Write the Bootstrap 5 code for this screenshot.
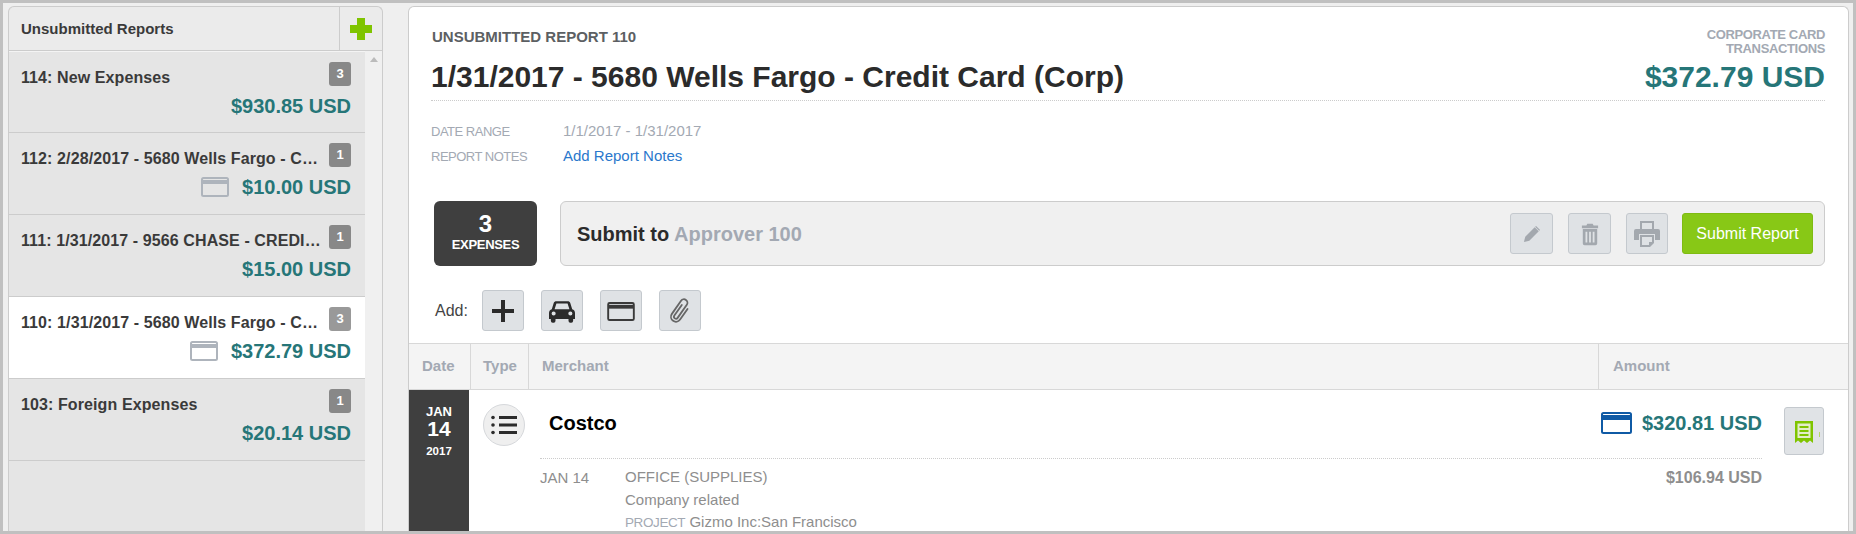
<!doctype html>
<html lang="en">
  <head>
    <meta charset="UTF-8">
    <meta name="viewport" content="width=device-width, initial-scale=1.0">
    <title>Unsubmitted Reports</title>
    <link href="https://cdn.jsdelivr.net/npm/bootstrap@5.3.0/dist/css/bootstrap.min.css" rel="stylesheet">
    <style>
      html, body { height: 100%; overflow: hidden; }
      body { font-family: "Liberation Sans", Arial, sans-serif; color: #333; font-size: 15px; background: #efefef; }
      .frame { height: 534px; border: 3px solid #c0c0c0; background: #efefef; overflow: hidden; padding: 3px 4px 0 5px; gap: 25px; }

      /* left column */
      .side { width: 375px; flex: none; border: 1px solid #ccc; border-bottom: 0; border-radius: 6px 6px 0 0; background: #e5e5e5; }
      .side-head { height: 44px; background: #ebebeb; border-bottom: 1px solid #ccc; border-radius: 6px 6px 0 0; }
      .side-title { font-size: 15px; font-weight: bold; padding: 2px 0 0 12px; color: #3a3a3a; }
      .side-add { width: 43px; border-left: 1px solid #ccc; }
      .side-body { min-height: 0; }
      .report-list { width: 356px; flex: none; border-radius: 0; }
      .report-item { height: 82px; background: #e5e5e5; border: 0; border-bottom: 1px solid #ccc; border-top: 1px solid #f4f4f4; padding: 10px 14px 0 12px; border-radius: 0 !important; }
      .report-item.current { background: #fff; }
      .report-item.current .count-tag { background: #999; }
      .report-name { font-size: 16px; font-weight: bold; letter-spacing: .1px; color: #3a3a3a; white-space: nowrap; padding-top: 4px; }
      .count-tag { width: 22px; height: 24px; background: #888; color: #fff; border-radius: 3px; font-size: 13px; font-weight: bold; flex: none; }
      .report-sum { font-size: 20px; font-weight: bold; color: #267678; height: 24px; margin-top: 4px; gap: 13px; }
      .scroll-rail { width: 17px; background: #f0f0f0; padding-top: 6px; }
      .scroll-up { border: 4px solid transparent; border-top: 0; border-bottom: 5px solid #bbb; width: 8px; margin: 0 auto; }

      /* main panel */
      .main-panel { min-width: 0; background: #fff; border: 1px solid #ccc; border-bottom: 0; border-radius: 6px 6px 0 0; }
      .head-block { padding: 21px 23px 0 22px; }
      .head-top { border-bottom: 1px dotted #ccc; height: 73px; }
      .report-kicker { font-size: 15px; font-weight: bold; color: #5c5f63; line-height: 18px; padding-left: 1px; }
      .report-title { font-size: 30px; font-weight: bold; color: #2b2b2b; margin: 13px 0 0; line-height: 36px; white-space: nowrap; }
      .card-kind { font-size: 13px; font-weight: bold; letter-spacing: -.35px; color: #a3a9b3; line-height: 14px; text-align: right; }
      .head-total { font-size: 30px; font-weight: bold; color: #267678; text-align: right; margin-top: 3px; line-height: 36px; }
      .meta-rows { margin-top: 18px; }
      .meta-row { height: 25px; font-size: 15px; color: #a3a9b3; }
      .meta-name { width: 132px; font-size: 13px; letter-spacing: -.5px; }
      .meta-link { color: #2a78cc; text-decoration: none; }
      .action-row { margin: 32px 23px 0 25px; gap: 23px; height: 65px; }
      .exp-box { width: 103px; background: #3f3f3f; color: #fff; border-radius: 6px; font-weight: bold; line-height: 1; padding-bottom: 4px; }
      .exp-num { font-size: 24px; }
      .exp-word { font-size: 13px; letter-spacing: -.3px; margin-top: 2px; }
      .submit-box { background: #f0f0f0; border: 1px solid #ccc; border-radius: 6px; padding: 0 11px 0 16px; gap: 15px; }
      .submit-label { font-size: 20px; font-weight: bold; color: #2b2b2b; }
      .submit-label span { color: #a3a9b3; }
      .tool-btn { padding: 0; width: 43px; height: 41px; background: #dfe2e5; border: 1px solid #c4c9ce; border-radius: 3px; flex: none; }
      .tool-btn:hover { background: #dfe2e5; border-color: #c4c9ce; }
      .print-btn { width: 42px; }
      .go-btn { width: 131px; height: 41px; margin-left: -1px; padding: 0; background: #88c816; border: 1px solid #7fbb12; border-radius: 3px; color: #fff; font-size: 16px; }
      .add-row { margin: 24px 0 12px 26px; gap: 17px; height: 41px; }
      .add-row .tool-btn { width: 42px; }
      .add-label { font-size: 16px; color: #444; width: 33px; margin-right: -3px; }
      .table-head { height: 47px; background: #f4f4f4; border-top: 1px solid #d8d8d8; border-bottom: 1px solid #d8d8d8; font-weight: bold; color: #a3a9b3; font-size: 15px; }
      .col-date { width: 62px; flex: none; padding-left: 13px; border-right: 1px solid #d8d8d8; }
      .col-type { width: 58px; flex: none; padding-left: 12px; border-right: 1px solid #d8d8d8; }
      .col-merchant { flex: 1; padding-left: 13px; border-right: 1px solid #d8d8d8; }
      .col-amount { width: 249px; flex: none; padding-left: 14px; }

      .exp-row { min-height: 160px; }
      .date-strip { width: 60px; flex: none; background: #3f3f3f; color: #fff; font-weight: bold; text-align: center; padding-top: 15px; line-height: 1; }
      .date-mon { font-size: 13px; }
      .date-day { font-size: 21px; }
      .date-year { font-size: 11.5px; margin-top: 7px; }
      .type-dot { width: 42px; height: 42px; border-radius: 50%; background: #efefef; border: 1px solid #d6d8db; margin: 14px 0 0 14px; flex: none; }
      .exp-main { margin-left: 15px; width: 1222px; flex: none; }
      .exp-top { height: 69px; border-bottom: 1px dotted #ccc; padding: 0 0 2px 9px; }
      .merchant-name { font-size: 20px; font-weight: bold; color: #000; }
      .exp-total { font-size: 20px; font-weight: bold; color: #267678; gap: 10px; }
      .exp-detail { color: #8e8e8e; font-size: 15px; padding-top: 7px; line-height: 22.5px; }
      .detail-date { width: 85px; padding-top: 1px; }
      .detail-sum { font-weight: bold; font-size: 16px; margin-left: auto; padding-top: 1px; }
      .detail-tag { font-size: 13.5px; letter-spacing: -.4px; color: #a3a9b3; }
      .receipt-btn { width: 40px; height: 48px; padding: 0; margin: 17px 0 0 22px; background: #e0e3e6; border: 1px solid #c4c9ce; border-radius: 3px; flex: none; }
    </style>
  </head>
  <body>
    <div class="frame d-flex">

      <!-- reports column -->
      <div class="side d-flex flex-column">
        <div class="side-head d-flex flex-none">
          <div class="side-title flex-grow-1 d-flex align-items-center">Unsubmitted Reports</div>
          <div class="side-add d-flex align-items-center justify-content-center">
            <svg width="24" height="24" viewBox="0 0 24 24"><path fill="#7fc400" d="M8 1h8v7h7v8h-7v7H8v-7H1V8h7z"/></svg>
          </div>
        </div>
        <div class="side-body d-flex flex-grow-1">
          <div class="report-list list-group">
            <div class="report-item list-group-item">
              <div class="d-flex justify-content-between">
                <div class="report-name">114: New Expenses</div>
                <div class="count-tag d-flex align-items-center justify-content-center">3</div>
              </div>
              <div class="report-sum d-flex justify-content-end align-items-center">$930.85 USD</div>
            </div>
            <div class="report-item list-group-item">
              <div class="d-flex justify-content-between">
                <div class="report-name">112: 2/28/2017 - 5680 Wells Fargo - C…</div>
                <div class="count-tag d-flex align-items-center justify-content-center">1</div>
              </div>
              <div class="report-sum d-flex justify-content-end align-items-center">
                <svg width="28" height="20" viewBox="0 0 28 20"><rect x="1" y="1" width="26" height="18" rx="1.5" fill="none" stroke="#aeb4bc" stroke-width="2"/><rect x="1" y="3" width="26" height="4" fill="#aeb4bc"/></svg>
                $10.00 USD
              </div>
            </div>
            <div class="report-item list-group-item">
              <div class="d-flex justify-content-between">
                <div class="report-name">111: 1/31/2017 - 9566 CHASE - CREDI…</div>
                <div class="count-tag d-flex align-items-center justify-content-center">1</div>
              </div>
              <div class="report-sum d-flex justify-content-end align-items-center">$15.00 USD</div>
            </div>
            <div class="report-item list-group-item current">
              <div class="d-flex justify-content-between">
                <div class="report-name">110: 1/31/2017 - 5680 Wells Fargo - C…</div>
                <div class="count-tag d-flex align-items-center justify-content-center">3</div>
              </div>
              <div class="report-sum d-flex justify-content-end align-items-center">
                <svg width="28" height="20" viewBox="0 0 28 20"><rect x="1" y="1" width="26" height="18" rx="1.5" fill="none" stroke="#aeb4bc" stroke-width="2"/><rect x="1" y="3" width="26" height="4" fill="#aeb4bc"/></svg>
                $372.79 USD
              </div>
            </div>
            <div class="report-item list-group-item">
              <div class="d-flex justify-content-between">
                <div class="report-name">103: Foreign Expenses</div>
                <div class="count-tag d-flex align-items-center justify-content-center">1</div>
              </div>
              <div class="report-sum d-flex justify-content-end align-items-center">$20.14 USD</div>
            </div>
          </div>
          <div class="scroll-rail flex-grow-1"><div class="scroll-up"></div></div>
        </div>
      </div>

      <!-- report detail -->
      <div class="main-panel flex-grow-1">
        <div class="head-block">
          <div class="head-top d-flex justify-content-between">
            <div>
              <div class="report-kicker">UNSUBMITTED REPORT 110</div>
              <h1 class="report-title">1/31/2017 - 5680 Wells Fargo - Credit Card (Corp)</h1>
            </div>
            <div>
              <div class="card-kind">CORPORATE CARD<br>TRANSACTIONS</div>
              <div class="head-total">$372.79 USD</div>
            </div>
          </div>
          <div class="meta-rows">
            <div class="meta-row d-flex align-items-center"><div class="meta-name">DATE RANGE</div><div>1/1/2017 - 1/31/2017</div></div>
            <div class="meta-row d-flex align-items-center"><div class="meta-name">REPORT NOTES</div><a class="meta-link" href="#">Add Report Notes</a></div>
          </div>
        </div>

        <div class="action-row d-flex">
          <div class="exp-box d-flex flex-column align-items-center justify-content-center flex-none">
            <div class="exp-num">3</div>
            <div class="exp-word">EXPENSES</div>
          </div>
          <div class="submit-box flex-grow-1 d-flex align-items-center">
            <div class="submit-label me-auto">Submit to <span>Approver 100</span></div>
            <button class="tool-btn btn" type="button">
              <svg width="18" height="18" viewBox="0 0 20 20"><path fill="#a3a8ae" d="M1 19l1.500-6L13 2.500 17.500 7 7 17.500zM14.500 1l4.500 4.500-1 1L13.500 2z"/></svg>
            </button>
            <button class="tool-btn btn" type="button">
              <svg width="18" height="23" viewBox="0 0 20 24"><path fill="#a3a8ae" fill-rule="evenodd" d="M7 0h6l1 2h5v3H1V2h5zM2 6h16v16a2 2 0 0 1-2 2H4a2 2 0 0 1-2-2zm3 3v12h2V9zm4 0v12h2V9zm4 0v12h2V9z"/></svg>
            </button>
            <button class="tool-btn print-btn btn" type="button">
              <svg width="26" height="26" viewBox="0 0 26 26"><path fill="#a3a8ae" fill-rule="evenodd" d="M6 0h14v8h-2V2H8v6H6zM2 8h22a2 2 0 0 1 2 2v9h-5v-6H5v6H0V10a2 2 0 0 1 2-2zM6 14h14v8l-4 4H6zm2 2v8h7v-3h3v-5z"/></svg>
            </button>
            <button class="go-btn btn" type="button">Submit Report</button>
          </div>
        </div>

        <div class="add-row d-flex align-items-center">
          <div class="add-label">Add:</div>
          <button class="tool-btn btn" type="button">
            <svg width="22" height="22" viewBox="0 0 22 22"><path fill="#2b2b2b" d="M9 0h4v9h9v4h-9v9H9v-9H0V9h9z"/></svg>
          </button>
          <button class="tool-btn btn" type="button">
            <svg width="26" height="23" viewBox="0 0 28 24"><path fill="#2b2b2b" fill-rule="evenodd" d="M8 1h12c1.500 0 2.500.7 3 2l2 6.500c1.800.6 3 2 3 4V20h-2v2a2 2 0 0 1-2 2h-1a2 2 0 0 1-2-2v-2H7v2a2 2 0 0 1-2 2H4a2 2 0 0 1-2-2v-2H0v-6.500c0-2 1.200-3.400 3-4L5 3c.5-1.300 1.500-2 3-2zM8 3.500L6 9.500h16l-2-6zM5 12a2.200 2.200 0 1 0 0 4.400A2.200 2.200 0 0 0 5 12zm18 0a2.200 2.200 0 1 0 0 4.400 2.200 2.200 0 0 0 0-4.400z"/></svg>
          </button>
          <button class="tool-btn btn" type="button">
            <svg width="28" height="19" viewBox="0 0 29 20"><rect x="1" y="1" width="27" height="18" rx="1.500" fill="none" stroke="#3a3a3a" stroke-width="2"/><rect x="1" y="3" width="27" height="4" fill="#3a3a3a"/></svg>
          </button>
          <button class="tool-btn btn" type="button">
            <svg width="22" height="28" viewBox="0 0 22 28"><g transform="rotate(35 11 14)"><path fill="none" stroke="#666" stroke-width="1.800" stroke-linecap="round" d="M9 8v13a2 2 0 0 0 4 0V5a3.500 3.500 0 0 0-7 0v16a5 5 0 0 0 10 0V8"/></g></svg>
          </button>
        </div>

        <div class="table-head d-flex align-items-stretch">
          <div class="col-date d-flex align-items-center">Date</div>
          <div class="col-type d-flex align-items-center">Type</div>
          <div class="col-merchant d-flex align-items-center">Merchant</div>
          <div class="col-amount d-flex align-items-center">Amount</div>
        </div>

        <div class="exp-row d-flex">
          <div class="date-strip">
            <div class="date-mon">JAN</div>
            <div class="date-day">14</div>
            <div class="date-year">2017</div>
          </div>
          <div class="type-dot d-flex align-items-center justify-content-center">
            <svg width="26" height="20" viewBox="0 0 26 20"><path fill="#2b2b2b" d="M8 1h18v3H8zM8 8.500h18v3H8zM8 16h18v3H8z"/><circle cx="2" cy="2.500" r="1.800" fill="#2b2b2b"/><circle cx="2" cy="10" r="1.800" fill="#2b2b2b"/><circle cx="2" cy="17.500" r="1.800" fill="#2b2b2b"/></svg>
          </div>
          <div class="exp-main">
            <div class="exp-top d-flex justify-content-between align-items-center">
              <div class="merchant-name">Costco</div>
              <div class="exp-total d-flex align-items-center">
                <svg width="31" height="22" viewBox="0 0 31 22"><rect x="1" y="1" width="29" height="20" rx="1.500" fill="none" stroke="#0f5aa5" stroke-width="2"/><rect x="1" y="3" width="29" height="5" fill="#0f5aa5"/></svg>
                $320.81 USD
              </div>
            </div>
            <div class="exp-detail d-flex">
              <div class="detail-date">JAN 14</div>
              <div>
                <div>OFFICE (SUPPLIES)</div>
                <div>Company related</div>
                <div><span class="detail-tag">PROJECT</span> Gizmo Inc:San Francisco</div>
              </div>
              <div class="detail-sum">$106.94 USD</div>
            </div>
          </div>
          <button class="receipt-btn btn" type="button">
            <svg width="38" height="22" viewBox="0 0 38 22"><path fill="#e3edc8" d="M10 0h18v20H10z"/><path fill="#7fc400" fill-rule="evenodd" d="M10 0h18v22l-3-2.500-3 2.500-3-2.500-3 2.500-3-2.500-3 2.500zM12.500 2.500v14.500h13V2.500z"/><path fill="#7fc400" d="M14.500 5h9v2h-9zM14.500 9h9v2h-9zM14.500 13h9v2h-9z"/><rect x="34" y="11" width="1" height="5" fill="#b5d66a"/></svg>
          </button>
        </div>
      </div>
    </div>

    <script src="https://cdn.jsdelivr.net/npm/bootstrap@5.3.0/dist/js/bootstrap.bundle.min.js"></script>
  </body>
</html>
